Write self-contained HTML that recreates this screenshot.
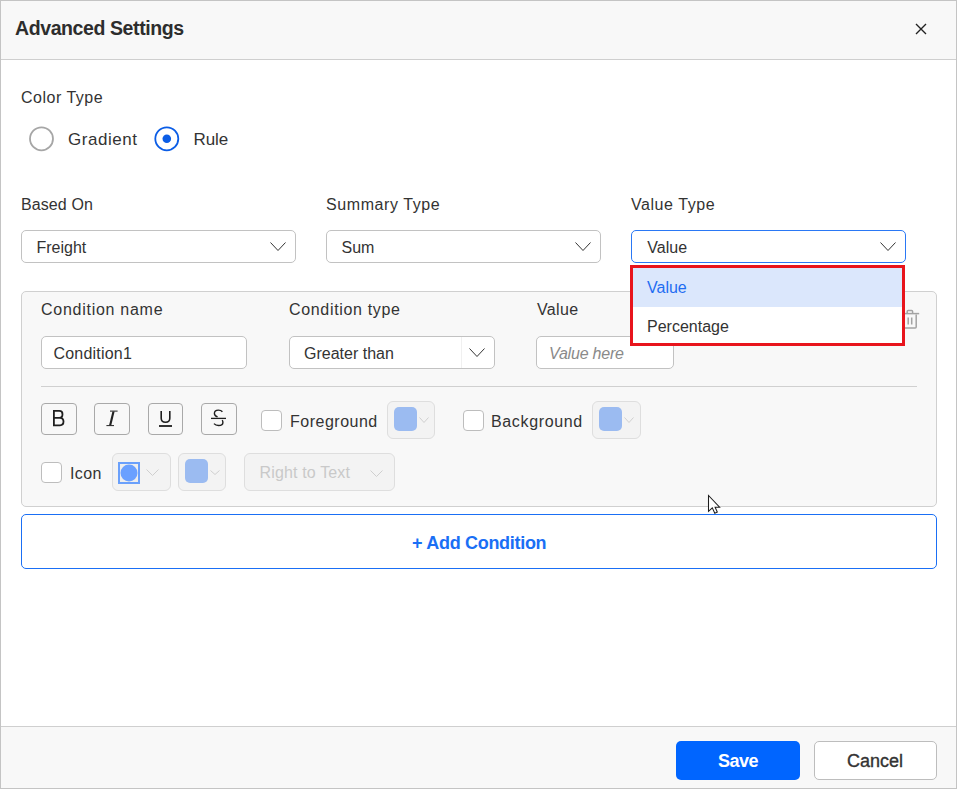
<!DOCTYPE html>
<html><head><meta charset="utf-8"><style>
html,body{margin:0;padding:0;width:957px;height:789px;overflow:hidden;background:#fff}
body{position:relative;font-family:"Liberation Sans",sans-serif}
.t{position:absolute;line-height:1;white-space:nowrap}
.b{position:absolute;display:block}
</style></head><body>
<div class="b" style="left:0px;top:0px;width:957px;height:789px;box-sizing:border-box;border:1px solid #c4c4c4;background:#fff"></div>
<div class="b" style="left:1px;top:1px;width:955px;height:58px;background:#f8f8f8"></div>
<div class="b" style="left:1px;top:59px;width:955px;height:1px;background:#cfcfcf"></div>
<div class="t" style="left:15.00px;top:18.79px;font-size:19.5px;font-weight:700;color:#2d2d2d;letter-spacing:-0.4px;font-style:normal;">Advanced Settings</div>
<svg class="b" style="left:914px;top:22px" width="14" height="14" viewBox="0 0 14 14"><path d="M2 2L12 12M12 2L2 12" stroke="#222" stroke-width="1.35"/></svg>
<div class="t" style="left:21.00px;top:90.06px;font-size:16px;font-weight:400;color:#333;letter-spacing:0.5px;font-style:normal;">Color Type</div>
<svg class="b" style="left:28px;top:126px" width="26" height="26"><circle cx="13.5" cy="12.8" r="11.5" fill="#fff" stroke="#a6a6a6" stroke-width="1.8"/></svg>
<div class="t" style="left:68.00px;top:131.41px;font-size:17px;font-weight:400;color:#333;letter-spacing:0.55px;font-style:normal;">Gradient</div>
<svg class="b" style="left:154px;top:126px" width="26" height="26"><circle cx="12.8" cy="12.8" r="11.5" fill="#fff" stroke="#0b5de6" stroke-width="1.8"/><circle cx="12.8" cy="12.8" r="4.3" fill="#0b5de6"/></svg>
<div class="t" style="left:193.60px;top:131.41px;font-size:17px;font-weight:400;color:#333;letter-spacing:-0.15px;font-style:normal;">Rule</div>
<div class="t" style="left:21.00px;top:197.16px;font-size:16px;font-weight:400;color:#333;letter-spacing:0.1px;font-style:normal;">Based On</div>
<div class="t" style="left:326.00px;top:197.06px;font-size:16px;font-weight:400;color:#333;letter-spacing:0.58px;font-style:normal;">Summary Type</div>
<div class="t" style="left:631.00px;top:197.06px;font-size:16px;font-weight:400;color:#333;letter-spacing:0.55px;font-style:normal;">Value Type</div>
<div class="b" style="left:21px;top:230px;width:275px;height:33px;box-sizing:border-box;border:1px solid #c2c2c2;border-radius:5px;background:#fff"></div>
<div class="t" style="left:36.50px;top:240.06px;font-size:16px;font-weight:400;color:#333;letter-spacing:0px;font-style:normal;">Freight</div>
<svg class="b" style="left:270px;top:242px" width="16" height="9" viewBox="0 0 16 9"><path d="M0.5 0.5 L8.0 8.5 L15.5 0.5" fill="none" stroke="#333" stroke-width="1.0"/></svg>
<div class="b" style="left:326px;top:230px;width:275px;height:33px;box-sizing:border-box;border:1px solid #c2c2c2;border-radius:5px;background:#fff"></div>
<div class="t" style="left:341.50px;top:240.06px;font-size:16px;font-weight:400;color:#333;letter-spacing:0px;font-style:normal;">Sum</div>
<svg class="b" style="left:575px;top:242px" width="16" height="9" viewBox="0 0 16 9"><path d="M0.5 0.5 L8.0 8.5 L15.5 0.5" fill="none" stroke="#333" stroke-width="1.0"/></svg>
<div class="b" style="left:631px;top:230px;width:275px;height:33px;box-sizing:border-box;border:1px solid #2a78f5;border-radius:5px;background:#fff"></div>
<div class="t" style="left:647.30px;top:240.06px;font-size:16px;font-weight:400;color:#333;letter-spacing:0px;font-style:normal;">Value</div>
<svg class="b" style="left:880px;top:242px" width="16" height="9" viewBox="0 0 16 9"><path d="M0.5 0.5 L8.0 8.5 L15.5 0.5" fill="none" stroke="#333" stroke-width="1.0"/></svg>
<div class="b" style="left:21px;top:291px;width:916px;height:216px;box-sizing:border-box;border:1px solid #d0d0d0;border-radius:5px;background:#f8f8f8"></div>
<div class="t" style="left:41.00px;top:302.26px;font-size:16px;font-weight:400;color:#333;letter-spacing:0.73px;font-style:normal;">Condition name</div>
<div class="t" style="left:289.00px;top:302.36px;font-size:16px;font-weight:400;color:#333;letter-spacing:0.67px;font-style:normal;">Condition type</div>
<div class="t" style="left:537.00px;top:302.16px;font-size:16px;font-weight:400;color:#333;letter-spacing:0.35px;font-style:normal;">Value</div>
<div class="b" style="left:41px;top:336px;width:206px;height:33px;box-sizing:border-box;border:1px solid #c2c2c2;border-radius:5px;background:#fff"></div>
<div class="t" style="left:53.50px;top:345.86px;font-size:16px;font-weight:400;color:#333;letter-spacing:0.2px;font-style:normal;">Condition1</div>
<div class="b" style="left:289px;top:336px;width:206px;height:33px;box-sizing:border-box;border:1px solid #c2c2c2;border-radius:5px;background:#fff"></div>
<div class="b" style="left:461px;top:337px;width:1px;height:31px;background:#f0f0f0"></div>
<div class="t" style="left:304.00px;top:346.26px;font-size:16px;font-weight:400;color:#333;letter-spacing:0px;font-style:normal;">Greater than</div>
<svg class="b" style="left:469px;top:348px" width="16" height="9" viewBox="0 0 16 9"><path d="M0.5 0.5 L8.0 8.5 L15.5 0.5" fill="none" stroke="#333" stroke-width="1.0"/></svg>
<div class="b" style="left:536px;top:336px;width:138px;height:33px;box-sizing:border-box;border:1px solid #c2c2c2;border-radius:5px;background:#fff"></div>
<div class="t" style="left:549.00px;top:346.06px;font-size:16px;font-weight:400;color:#8a8a8a;letter-spacing:-0.2px;font-style:italic;">Value here</div>
<svg class="b" style="left:895px;top:305px" width="30" height="30" viewBox="895 305 30 30"><g fill="none" stroke="#a3a3a3" stroke-width="1.5"><path d="M900 313.6H919.2"/><path d="M907.2 313V311.4Q907.2 310.4 908.2 310.4H911.6Q912.6 310.4 912.6 311.4V313"/><path d="M903.6 314.5V327Q903.6 328 904.6 328H915.2Q916.2 328 916.2 327V314.5"/><path d="M908.2 317.5V324.5M911.7 317.5V324.5"/></g></svg>
<div class="b" style="left:41px;top:386px;width:876px;height:1px;background:#d0d0d0"></div>
<div class="b" style="left:41px;top:403px;width:36px;height:32px;box-sizing:border-box;border:1px solid #a9a9a9;border-radius:4px;background:#f8f8f8"></div>
<div class="b" style="left:94px;top:403px;width:36px;height:32px;box-sizing:border-box;border:1px solid #a9a9a9;border-radius:4px;background:#f8f8f8"></div>
<div class="b" style="left:148px;top:403px;width:35px;height:32px;box-sizing:border-box;border:1px solid #a9a9a9;border-radius:4px;background:#f8f8f8"></div>
<div class="b" style="left:201px;top:403px;width:36px;height:32px;box-sizing:border-box;border:1px solid #a9a9a9;border-radius:4px;background:#f8f8f8"></div>
<svg class="b" style="left:0px;top:400px" width="250" height="40" viewBox="0 400 250 40"><g fill="none" stroke="#1e1e1e" stroke-width="1.6"><path d="M53.9 410.9H59.3C61.5 410.9 62.5 412.3 62.5 414.2C62.5 416.2 61.3 417.8 59.3 417.8H53.9ZM53.9 417.8H60C62.3 417.8 63.5 419.5 63.5 421.6C63.5 423.8 62.2 425.3 60 425.3H53.9Z" stroke-width="1.8"/><path d="M161.2 411V418.3C161.2 421 162.9 422.3 165.5 422.3C168.1 422.3 169.8 421 169.8 418.3V411"/><path d="M159 426H172" stroke-width="1.8"/><path d="M222.4 411.8C221.4 410.6 220 410.1 218.4 410.1C216 410.1 214.4 411.6 214.4 413.5C214.4 415.2 215.7 416.3 217.6 416.9" stroke-width="1.4"/><path d="M211 418.4H226" stroke-width="1.3"/><path d="M222.2 420.2C222.7 420.9 222.9 421.7 222.9 422.4C222.9 424.4 221 425.5 218.6 425.5C216.6 425.5 215 424.8 214 423.6" stroke-width="1.4"/></g><g fill="#222"><path d="M110 410.6H117.6V411.6H110Z"/><path d="M106.4 425.1H114V426.1H106.4Z"/><path d="M112.4 411.5H114.6L111.3 425.2H109.1Z"/></g></svg>
<div class="b" style="left:261px;top:410px;width:21px;height:21px;box-sizing:border-box;border:1px solid #bdbdbd;border-radius:4px;background:#fff"></div>
<div class="t" style="left:290.00px;top:413.66px;font-size:16px;font-weight:400;color:#333;letter-spacing:0.5px;font-style:normal;">Foreground</div>
<div class="b" style="left:387px;top:401px;width:48px;height:38px;box-sizing:border-box;border:1px solid #dedede;border-radius:6px;background:#f3f3f3"></div>
<div class="b" style="left:394px;top:407px;width:23px;height:24px;border-radius:5px;background:#9bbbf1"></div>
<svg class="b" style="left:419px;top:417px" width="10" height="6" viewBox="0 0 10 6"><path d="M0.5 0.5 L5.0 5.5 L9.5 0.5" fill="none" stroke="#cfcfcf" stroke-width="1"/></svg>
<div class="b" style="left:463px;top:410px;width:21px;height:21px;box-sizing:border-box;border:1px solid #bdbdbd;border-radius:4px;background:#fff"></div>
<div class="t" style="left:491.00px;top:413.66px;font-size:16px;font-weight:400;color:#333;letter-spacing:0.65px;font-style:normal;">Background</div>
<div class="b" style="left:592px;top:401px;width:49px;height:38px;box-sizing:border-box;border:1px solid #dedede;border-radius:6px;background:#f3f3f3"></div>
<div class="b" style="left:599px;top:407px;width:23px;height:24px;border-radius:5px;background:#9bbbf1"></div>
<svg class="b" style="left:624px;top:417px" width="10" height="6" viewBox="0 0 10 6"><path d="M0.5 0.5 L5.0 5.5 L9.5 0.5" fill="none" stroke="#cfcfcf" stroke-width="1"/></svg>
<div class="b" style="left:41px;top:462px;width:21px;height:21px;box-sizing:border-box;border:1px solid #bdbdbd;border-radius:4px;background:#fff"></div>
<div class="t" style="left:70.00px;top:466.36px;font-size:16px;font-weight:400;color:#333;letter-spacing:0.4px;font-style:normal;">Icon</div>
<div class="b" style="left:112px;top:453px;width:59px;height:38px;box-sizing:border-box;border:1px solid #dedede;border-radius:6px;background:#f3f3f3"></div>
<div class="b" style="left:118px;top:462px;width:22px;height:22px;box-sizing:border-box;border:2px solid #6aa0fb;background:#eeeeee"></div>
<svg class="b" style="left:120px;top:464px" width="18" height="18"><circle cx="9" cy="9" r="8.5" fill="#6aa0ff"/></svg>
<svg class="b" style="left:146px;top:469px" width="13" height="7" viewBox="0 0 13 7"><path d="M0.5 0.5 L6.5 6.5 L12.5 0.5" fill="none" stroke="#cfcfcf" stroke-width="1"/></svg>
<div class="b" style="left:178px;top:453px;width:48px;height:38px;box-sizing:border-box;border:1px solid #dedede;border-radius:6px;background:#f3f3f3"></div>
<div class="b" style="left:185px;top:459px;width:23px;height:24px;border-radius:5px;background:#9bbbf1"></div>
<svg class="b" style="left:210px;top:470px" width="10" height="5" viewBox="0 0 10 5"><path d="M0.5 0.5 L5.0 4.5 L9.5 0.5" fill="none" stroke="#cfcfcf" stroke-width="1"/></svg>
<div class="b" style="left:244px;top:453px;width:151px;height:38px;box-sizing:border-box;border:1px solid #dedede;border-radius:6px;background:#f3f3f3"></div>
<div class="t" style="left:259.50px;top:464.76px;font-size:16px;font-weight:400;color:#c9c9c9;letter-spacing:0.15px;font-style:normal;">Right to Text</div>
<svg class="b" style="left:370px;top:469.5px" width="13" height="7" viewBox="0 0 13 7"><path d="M0.5 0.5 L6.5 6.5 L12.5 0.5" fill="none" stroke="#cfcfcf" stroke-width="1"/></svg>
<div class="b" style="left:21px;top:514px;width:916px;height:55px;box-sizing:border-box;border:1px solid #1a6ff5;border-radius:5px;background:#fff"></div>
<div class="t" style="left:412.00px;top:534.46px;font-size:18px;font-weight:700;color:#1a6ff5;letter-spacing:-0.3px;font-style:normal;">+ Add Condition</div>
<div class="b" style="left:1px;top:726px;width:955px;height:1px;background:#cfcfcf"></div>
<div class="b" style="left:1px;top:727px;width:955px;height:61px;background:#f8f8f8"></div>
<div class="b" style="left:676px;top:741px;width:124px;height:39px;border-radius:5px;background:#0065ff"></div>
<div class="t" style="left:718.00px;top:751.86px;font-size:18px;font-weight:700;color:#fff;letter-spacing:-0.5px;font-style:normal;">Save</div>
<div class="b" style="left:814px;top:741px;width:123px;height:39px;box-sizing:border-box;border:1px solid #bdbdbd;border-radius:5px;background:#fff"></div>
<div class="t" style="left:847.00px;top:751.86px;font-size:18px;font-weight:400;color:#333;letter-spacing:0px;font-style:normal;-webkit-text-stroke:0.35px #333">Cancel</div>
<div class="b" style="left:630px;top:265px;width:275px;height:81px;box-sizing:border-box;border:3px solid #e8141c;background:#fff"></div>
<div class="b" style="left:633px;top:268px;width:269px;height:39px;background:#dbe7fc"></div>
<div class="t" style="left:647.00px;top:279.76px;font-size:16px;font-weight:400;color:#1f6df2;letter-spacing:0px;font-style:normal;">Value</div>
<div class="t" style="left:647.00px;top:319.06px;font-size:16px;font-weight:400;color:#333;letter-spacing:0px;font-style:normal;">Percentage</div>
<svg class="b" style="left:707px;top:494px" width="16" height="22" viewBox="0 0 16 22"><path d="M1.5 1.5V17.4L5.3 13.9L7.8 19.2L10.3 18.1L8.1 13.2H12.6Z" fill="#fff" stroke="#1e1e1e" stroke-width="1.05" stroke-linejoin="miter"/></svg>
</body></html>
